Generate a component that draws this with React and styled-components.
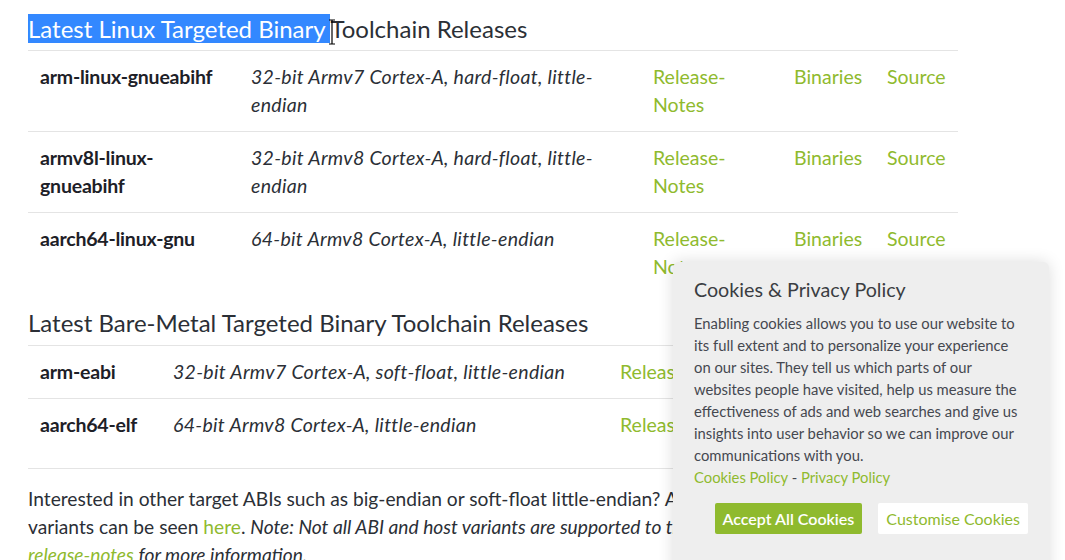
import React from "react";
import styled, { createGlobalStyle } from "styled-components";

const Global = createGlobalStyle`
  html, body { margin: 0; padding: 0; background: #fff; }
  body { font-family: Lato, "Open Sans", sans-serif; color: #2b2f36; overflow: hidden; }
`;

const GREEN = "#8fba2e";

const Page = styled.div`
  position: relative;
  width: 1065px;
  height: 560px;
  overflow: hidden;
`;

const Content = styled.main`
  width: 930px;
  padding: 16px 0 0 28px;
`;

const Heading = styled.h2`
  position: relative;
  margin: ${(p) => p.$top || 0}px 0 ${(p) => p.$gap || 8}px;
  font-size: 24px;
  font-weight: 400;
  line-height: 26px;
  color: #2b2f36;
`;

const Selected = styled.span`
  background: #3388ff;
  color: #fff;
`;

const Cursor = styled.svg`
  position: absolute;
  left: 299px;
  top: 3px;
`;

const Table = styled.table`
  width: 930px;
  border-collapse: collapse;
  table-layout: fixed;
  border-bottom: ${(p) => (p.$bottom ? "1px solid #e4e4e4" : "none")};
`;

const Row = styled.tr`
  border-top: 1px solid #e4e4e4;
`;

const Cell = styled.td`
  padding: 12px 12px ${(p) => (p.$extra ? 29 : 12)}px;
  vertical-align: top;
  font-size: 19.5px;
  line-height: 28px;
`;

const Name = styled(Cell)`
  font-weight: 700;
  color: #1d2027;
  letter-spacing: -0.2px;
`;

const Desc = styled(Cell)`
  font-style: italic;
  color: #2b2f36;
  letter-spacing: 0.3px;
`;

const LinkCell = styled(Cell)`
  color: ${GREEN};
`;

const Wrap = styled.span`
  display: inline-block;
  max-width: ${(p) => p.$max}px;
`;

const Para = styled.p`
  margin: 16px 0 0;
  font-size: 19.2px;
  line-height: 28px;
  color: #2b2f36;
  width: 930px;
`;

const A = styled.a`
  color: ${GREEN};
  text-decoration: none;
  font-style: ${(p) => (p.$italic ? "italic" : "inherit")};
`;

const Popup = styled.aside`
  position: absolute;
  left: 673px;
  top: 262px;
  width: 334px;
  height: 320px;
  padding: 15px 21px 0;
  background: #eeeeee;
  border-radius: 6px;
  box-shadow: 0 0 16px rgba(0, 0, 0, 0.14);
`;

const PopTitle = styled.h3`
  margin: 0 0 9px;
  font-size: 19.7px;
  font-weight: 400;
  line-height: 26px;
  color: #3a3d42;
`;

const PopText = styled.p`
  margin: 0;
  font-size: 14.8px;
  line-height: 22px;
  color: #454850;
`;

const Buttons = styled.div`
  display: flex;
  justify-content: flex-end;
  gap: 16px;
  margin-top: 15px;
`;

const Button = styled.button`
  height: 31px;
  padding: 0 8px;
  border: none;
  border-radius: 2px;
  font-family: Lato, sans-serif;
  font-size: 16px;
  font-weight: ${(p) => (p.$primary ? 600 : 400)};
  background: ${(p) => (p.$primary ? GREEN : "#fff")};
  color: ${(p) => (p.$primary ? "#fff" : GREEN)};
  cursor: pointer;
`;

const linux = [
  ["arm-linux-gnueabihf", "32-bit Armv7 Cortex-A, hard-float, little-endian"],
  ["armv8l-linux-gnueabihf", "32-bit Armv8 Cortex-A, hard-float, little-endian"],
  ["aarch64-linux-gnu", "64-bit Armv8 Cortex-A, little-endian"],
];

const bare = [
  ["arm-eabi", "32-bit Armv7 Cortex-A, soft-float, little-endian"],
  ["aarch64-elf", "64-bit Armv8 Cortex-A, little-endian"],
];

export default function App() {
  return (
    <Page>
      <Global />
      <Content>
        <Heading>
          <Selected>Latest Linux Targeted Binary </Selected>Toolchain Releases
          <Cursor width="10" height="26" viewBox="0 0 10 26">
            <path d="M2 1h3M5 1h3M5 1v24M2 25h3M5 25h3" stroke="#000" strokeWidth="1.2" fill="none" />
          </Cursor>
        </Heading>
        <Table>
          <colgroup>
            <col style={{ width: 211 }} />
            <col style={{ width: 402 }} />
            <col style={{ width: 141 }} />
            <col style={{ width: 93 }} />
            <col style={{ width: 83 }} />
          </colgroup>
          <tbody>
            {linux.map(([n, d]) => (
              <Row key={n}>
                <Name>{n}</Name>
                <Desc>{d}</Desc>
                <LinkCell>
                  <Wrap $max={92}>Release-Notes</Wrap>
                </LinkCell>
                <LinkCell>Binaries</LinkCell>
                <LinkCell>Source</LinkCell>
              </Row>
            ))}
          </tbody>
        </Table>

        <Heading $top={17} $gap={9}>Latest Bare-Metal Targeted Binary Toolchain Releases</Heading>
        <Table $bottom>
          <colgroup>
            <col style={{ width: 133 }} />
            <col style={{ width: 447 }} />
            <col style={{ width: 168 }} />
            <col style={{ width: 93 }} />
            <col style={{ width: 89 }} />
          </colgroup>
          <tbody>
            {bare.map(([n, d], i) => (
              <Row key={n}>
                <Name $extra={i === 1}>{n}</Name>
                <Desc $extra={i === 1}>{d}</Desc>
                <LinkCell $extra={i === 1}>Release-Notes</LinkCell>
                <LinkCell $extra={i === 1}>Binaries</LinkCell>
                <LinkCell $extra={i === 1}>Source</LinkCell>
              </Row>
            ))}
          </tbody>
        </Table>

        <Para>
          Interested in other target ABIs such as big-endian or soft-float little-endian? All ABI and host
          <br />
          variants can be seen <A href="#">here</A>.{" "}
          <em>Note: Not all ABI and host variants are supported to the same level, see the</em>
          <br />
          <A href="#" $italic>release-notes</A> <em>for more information.</em>
        </Para>
      </Content>

      <Popup>
        <PopTitle>Cookies &amp; Privacy Policy</PopTitle>
        <PopText>
          Enabling cookies allows you to use our website to its full extent and to personalize your
          experience on our sites. They tell us which parts of our websites people have visited, help us
          measure the effectiveness of ads and web searches and give us insights into user behavior so we
          can improve our communications with you.
          <br />
          <A href="#">Cookies Policy</A> - <A href="#">Privacy Policy</A>
        </PopText>
        <Buttons>
          <Button $primary>Accept All Cookies</Button>
          <Button>Customise Cookies</Button>
        </Buttons>
      </Popup>
    </Page>
  );
}
